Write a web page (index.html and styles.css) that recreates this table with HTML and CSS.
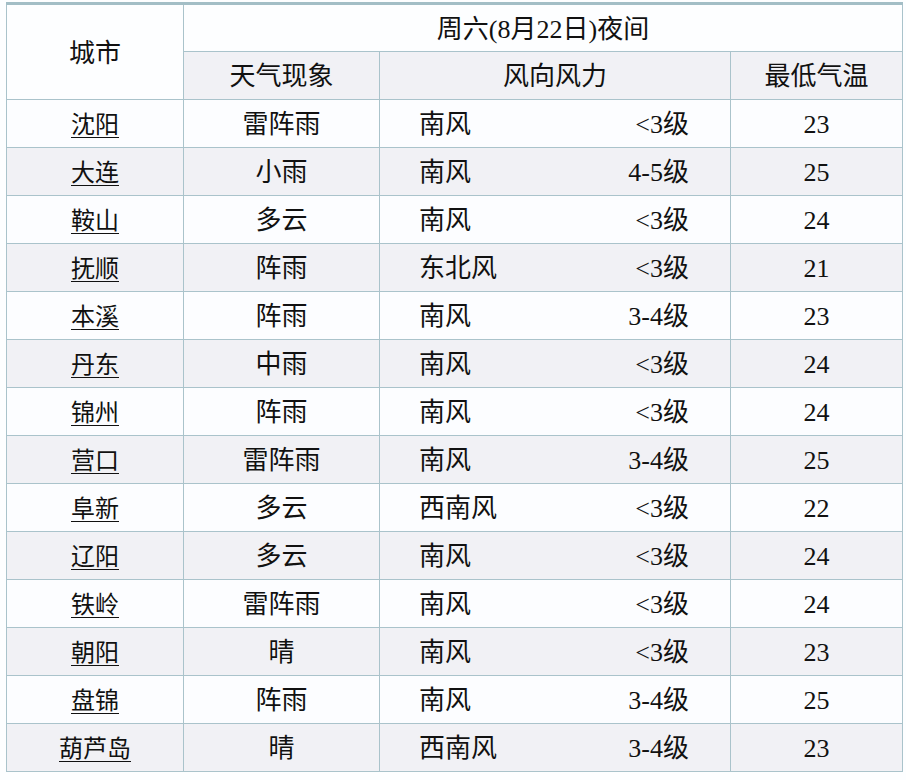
FILE: index.html
```html
<!DOCTYPE html>
<html lang="zh">
<head>
<meta charset="utf-8">
<title>辽宁天气预报</title>
<link rel="stylesheet" href="styles.css">
</head>
<body>
<table class="wx">
  <colgroup>
    <col class="c-city"><col class="c-wx"><col class="c-wind"><col class="c-temp">
  </colgroup>
  <thead>
    <tr class="h1">
      <th rowspan="2" class="city-h">城市</th>
      <th colspan="3" class="date-h">周六(8月22日)夜间</th>
    </tr>
    <tr class="h2">
      <th>天气现象</th>
      <th>风向风力</th>
      <th>最低气温</th>
    </tr>
  </thead>
  <tbody>
    <tr><td><a href="#">沈阳</a></td><td>雷阵雨</td><td><div class="wind"><span>南风</span><span>&lt;3级</span></div></td><td>23</td></tr>
    <tr><td><a href="#">大连</a></td><td>小雨</td><td><div class="wind"><span>南风</span><span>4-5级</span></div></td><td>25</td></tr>
    <tr><td><a href="#">鞍山</a></td><td>多云</td><td><div class="wind"><span>南风</span><span>&lt;3级</span></div></td><td>24</td></tr>
    <tr><td><a href="#">抚顺</a></td><td>阵雨</td><td><div class="wind"><span>东北风</span><span>&lt;3级</span></div></td><td>21</td></tr>
    <tr><td><a href="#">本溪</a></td><td>阵雨</td><td><div class="wind"><span>南风</span><span>3-4级</span></div></td><td>23</td></tr>
    <tr><td><a href="#">丹东</a></td><td>中雨</td><td><div class="wind"><span>南风</span><span>&lt;3级</span></div></td><td>24</td></tr>
    <tr><td><a href="#">锦州</a></td><td>阵雨</td><td><div class="wind"><span>南风</span><span>&lt;3级</span></div></td><td>24</td></tr>
    <tr><td><a href="#">营口</a></td><td>雷阵雨</td><td><div class="wind"><span>南风</span><span>3-4级</span></div></td><td>25</td></tr>
    <tr><td><a href="#">阜新</a></td><td>多云</td><td><div class="wind"><span>西南风</span><span>&lt;3级</span></div></td><td>22</td></tr>
    <tr><td><a href="#">辽阳</a></td><td>多云</td><td><div class="wind"><span>南风</span><span>&lt;3级</span></div></td><td>24</td></tr>
    <tr><td><a href="#">铁岭</a></td><td>雷阵雨</td><td><div class="wind"><span>南风</span><span>&lt;3级</span></div></td><td>24</td></tr>
    <tr><td><a href="#">朝阳</a></td><td>晴</td><td><div class="wind"><span>南风</span><span>&lt;3级</span></div></td><td>23</td></tr>
    <tr><td><a href="#">盘锦</a></td><td>阵雨</td><td><div class="wind"><span>南风</span><span>3-4级</span></div></td><td>25</td></tr>
    <tr><td><a href="#">葫芦岛</a></td><td>晴</td><td><div class="wind"><span>西南风</span><span>3-4级</span></div></td><td>23</td></tr>
  </tbody>
</table>
</body>
</html>
```

FILE: styles.css
```css
html, body {
  margin: 0;
  padding: 0;
  background: #fdfeff;
}

body {
  padding: 2px 0 0 6px;
  font-family: "Liberation Serif", "Noto Sans CJK SC", serif;
  color: #111;
}

.wx {
  border-collapse: collapse;
  width: 896px;
  table-layout: fixed;
  border-top: 3px solid #a3bec6;
}

.c-city { width: 177px; }
.c-wx { width: 196px; }
.c-wind { width: 351px; }
.c-temp { width: 172px; }

.wx th,
.wx td {
  border: 1px solid #aac3cb;
  padding: 3px 0 0;
  height: 44px;
  text-align: center;
  vertical-align: middle;
  font-weight: 400;
  font-size: 26px;
  line-height: 30px;
}

.wx thead .h1 th {
  background: #fdfeff;
  height: 43px;
}

.wx thead .h2 th {
  background: #f1f1f5;
}

.wx tbody tr:nth-child(odd) td {
  background: #fcfdff;
}

.wx tbody tr:nth-child(even) td {
  background: #f1f1f5;
}

.wx td a {
  color: #111;
  font-size: 24px;
  text-decoration: underline;
  text-underline-offset: 4px;
  text-decoration-thickness: 1px;
}

.wind {
  display: flex;
  justify-content: space-between;
  padding: 0 41px 0 39px;
}
```
